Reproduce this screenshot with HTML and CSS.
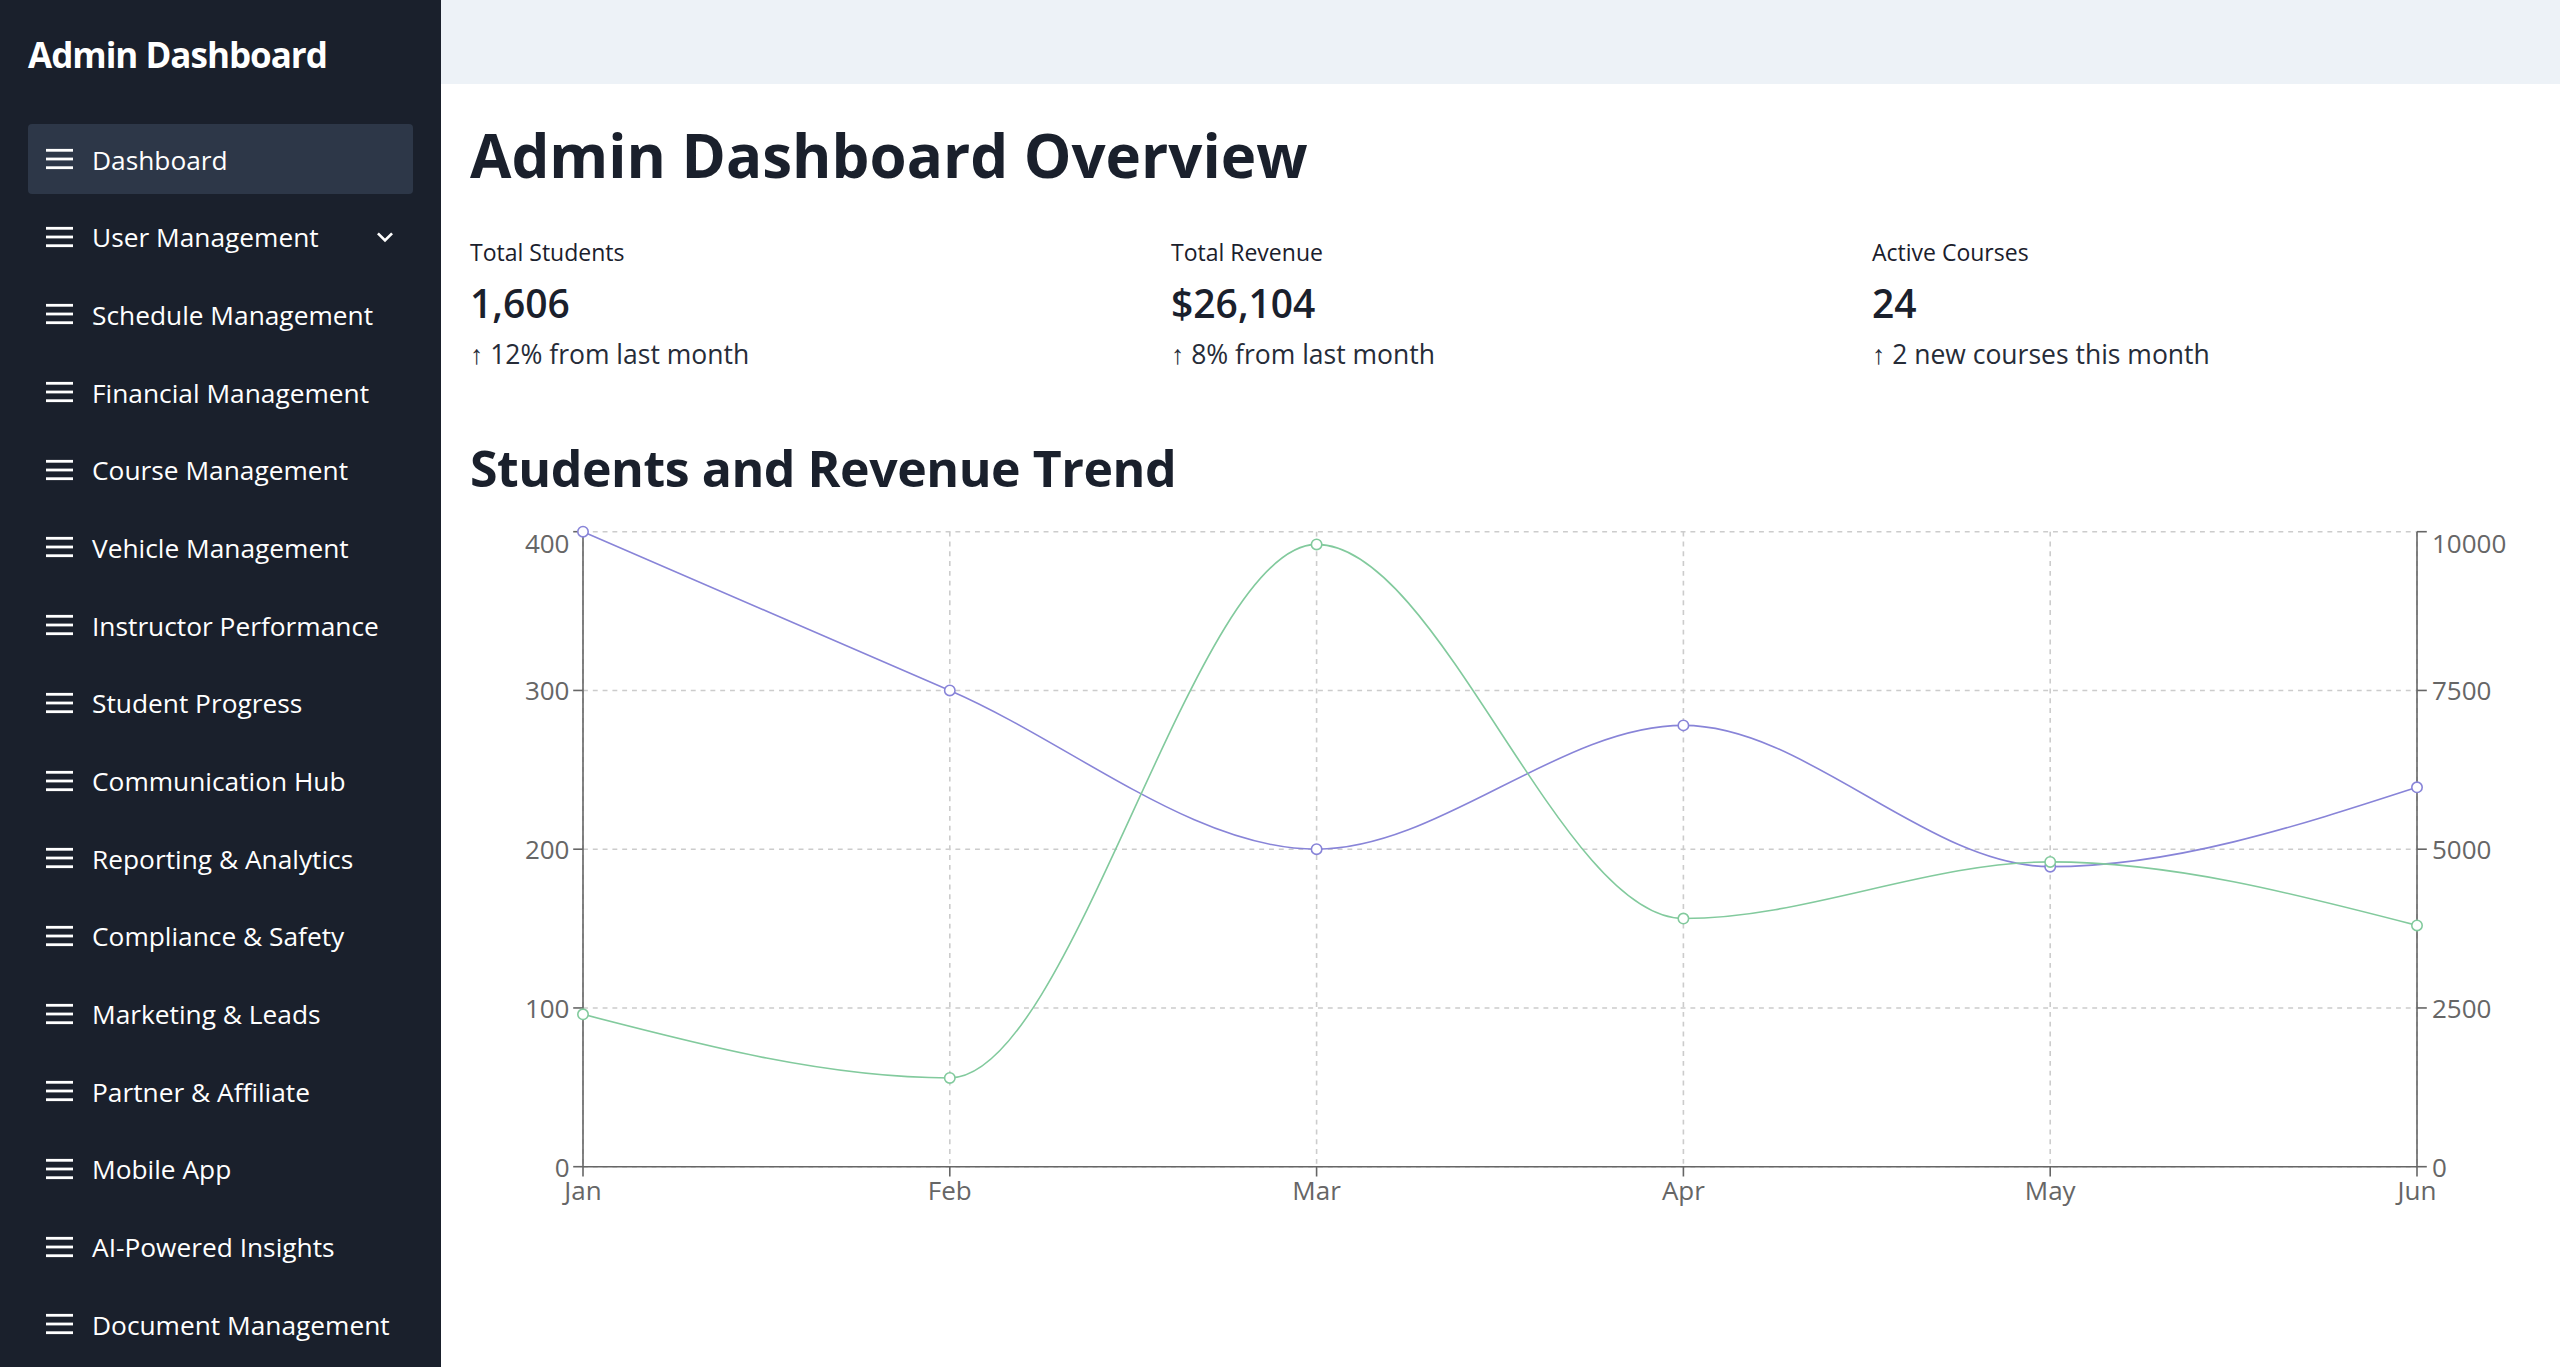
FILE: index.html
```html
<!DOCTYPE html>
<html lang="en">
<head>
<meta charset="utf-8">
<title>Admin Dashboard</title>
<link rel="stylesheet" href="styles.css">
</head>
<body>
<div class="app">
  <aside class="sidebar">
    <div class="brand">Admin Dashboard</div>
    <nav class="nav">
      <a class="nav-item active"><svg class="ham" viewBox="0 0 27 24"><rect x="0" y="1.9" width="27" height="2.8"/><rect x="0" y="10.6" width="27" height="2.8"/><rect x="0" y="19.3" width="27" height="2.8"/></svg><span>Dashboard</span></a>
      <a class="nav-item"><svg class="ham" viewBox="0 0 27 24"><rect x="0" y="1.9" width="27" height="2.8"/><rect x="0" y="10.6" width="27" height="2.8"/><rect x="0" y="19.3" width="27" height="2.8"/></svg><span>User Management</span><svg class="chev" viewBox="0 0 24 24"><path d="M16.59 8.59L12 13.17 7.41 8.59 6 10l6 6 6-6z"/></svg></a>
      <a class="nav-item"><svg class="ham" viewBox="0 0 27 24"><rect x="0" y="1.9" width="27" height="2.8"/><rect x="0" y="10.6" width="27" height="2.8"/><rect x="0" y="19.3" width="27" height="2.8"/></svg><span>Schedule Management</span></a>
      <a class="nav-item"><svg class="ham" viewBox="0 0 27 24"><rect x="0" y="1.9" width="27" height="2.8"/><rect x="0" y="10.6" width="27" height="2.8"/><rect x="0" y="19.3" width="27" height="2.8"/></svg><span>Financial Management</span></a>
      <a class="nav-item"><svg class="ham" viewBox="0 0 27 24"><rect x="0" y="1.9" width="27" height="2.8"/><rect x="0" y="10.6" width="27" height="2.8"/><rect x="0" y="19.3" width="27" height="2.8"/></svg><span>Course Management</span></a>
      <a class="nav-item"><svg class="ham" viewBox="0 0 27 24"><rect x="0" y="1.9" width="27" height="2.8"/><rect x="0" y="10.6" width="27" height="2.8"/><rect x="0" y="19.3" width="27" height="2.8"/></svg><span>Vehicle Management</span></a>
      <a class="nav-item"><svg class="ham" viewBox="0 0 27 24"><rect x="0" y="1.9" width="27" height="2.8"/><rect x="0" y="10.6" width="27" height="2.8"/><rect x="0" y="19.3" width="27" height="2.8"/></svg><span>Instructor Performance</span></a>
      <a class="nav-item"><svg class="ham" viewBox="0 0 27 24"><rect x="0" y="1.9" width="27" height="2.8"/><rect x="0" y="10.6" width="27" height="2.8"/><rect x="0" y="19.3" width="27" height="2.8"/></svg><span>Student Progress</span></a>
      <a class="nav-item"><svg class="ham" viewBox="0 0 27 24"><rect x="0" y="1.9" width="27" height="2.8"/><rect x="0" y="10.6" width="27" height="2.8"/><rect x="0" y="19.3" width="27" height="2.8"/></svg><span>Communication Hub</span></a>
      <a class="nav-item"><svg class="ham" viewBox="0 0 27 24"><rect x="0" y="1.9" width="27" height="2.8"/><rect x="0" y="10.6" width="27" height="2.8"/><rect x="0" y="19.3" width="27" height="2.8"/></svg><span>Reporting &amp; Analytics</span></a>
      <a class="nav-item"><svg class="ham" viewBox="0 0 27 24"><rect x="0" y="1.9" width="27" height="2.8"/><rect x="0" y="10.6" width="27" height="2.8"/><rect x="0" y="19.3" width="27" height="2.8"/></svg><span>Compliance &amp; Safety</span></a>
      <a class="nav-item"><svg class="ham" viewBox="0 0 27 24"><rect x="0" y="1.9" width="27" height="2.8"/><rect x="0" y="10.6" width="27" height="2.8"/><rect x="0" y="19.3" width="27" height="2.8"/></svg><span>Marketing &amp; Leads</span></a>
      <a class="nav-item"><svg class="ham" viewBox="0 0 27 24"><rect x="0" y="1.9" width="27" height="2.8"/><rect x="0" y="10.6" width="27" height="2.8"/><rect x="0" y="19.3" width="27" height="2.8"/></svg><span>Partner &amp; Affiliate</span></a>
      <a class="nav-item"><svg class="ham" viewBox="0 0 27 24"><rect x="0" y="1.9" width="27" height="2.8"/><rect x="0" y="10.6" width="27" height="2.8"/><rect x="0" y="19.3" width="27" height="2.8"/></svg><span>Mobile App</span></a>
      <a class="nav-item"><svg class="ham" viewBox="0 0 27 24"><rect x="0" y="1.9" width="27" height="2.8"/><rect x="0" y="10.6" width="27" height="2.8"/><rect x="0" y="19.3" width="27" height="2.8"/></svg><span>AI-Powered Insights</span></a>
      <a class="nav-item"><svg class="ham" viewBox="0 0 27 24"><rect x="0" y="1.9" width="27" height="2.8"/><rect x="0" y="10.6" width="27" height="2.8"/><rect x="0" y="19.3" width="27" height="2.8"/></svg><span>Document Management</span></a>
    </nav>
  </aside>
  <main class="main">
    <div class="topbar"></div>
    <div class="content">
      <h1 class="title">Admin Dashboard Overview</h1>
      <div class="stats">
        <div class="stat">
          <div class="stat-label">Total Students</div>
          <div class="stat-number">1,606</div>
          <div class="stat-help">↑ 12% from last month</div>
        </div>
        <div class="stat">
          <div class="stat-label">Total Revenue</div>
          <div class="stat-number">$26,104</div>
          <div class="stat-help">↑ 8% from last month</div>
        </div>
        <div class="stat">
          <div class="stat-label">Active Courses</div>
          <div class="stat-number">24</div>
          <div class="stat-help">↑ 2 new courses this month</div>
        </div>
      </div>
      <h2 class="section-title">Students and Revenue Trend</h2>
      <svg class="chart" width="2061" height="720" viewBox="470 500 2061 720">
        <g class="grid">
          <line x1="583" y1="531.7" x2="2417" y2="531.7"/>
          <line x1="583" y1="690.45" x2="2417" y2="690.45"/>
          <line x1="583" y1="849.2" x2="2417" y2="849.2"/>
          <line x1="583" y1="1007.95" x2="2417" y2="1007.95"/>
          <line x1="583" y1="1166.7" x2="2417" y2="1166.7"/>
          <line x1="583" y1="531.7" x2="583" y2="1166.7"/>
          <line x1="949.8" y1="531.7" x2="949.8" y2="1166.7"/>
          <line x1="1316.6" y1="531.7" x2="1316.6" y2="1166.7"/>
          <line x1="1683.4" y1="531.7" x2="1683.4" y2="1166.7"/>
          <line x1="2050.2" y1="531.7" x2="2050.2" y2="1166.7"/>
          <line x1="2417" y1="531.7" x2="2417" y2="1166.7"/>
        </g>
        <g class="axis">
          <line x1="583" y1="1166.7" x2="2417" y2="1166.7"/>
          <line x1="583" y1="531.7" x2="583" y2="1166.7"/>
          <line x1="2417" y1="531.7" x2="2417" y2="1166.7"/>
          <line x1="583" y1="1166.7" x2="583" y2="1176.5"/>
          <line x1="949.8" y1="1166.7" x2="949.8" y2="1176.5"/>
          <line x1="1316.6" y1="1166.7" x2="1316.6" y2="1176.5"/>
          <line x1="1683.4" y1="1166.7" x2="1683.4" y2="1176.5"/>
          <line x1="2050.2" y1="1166.7" x2="2050.2" y2="1176.5"/>
          <line x1="2417" y1="1166.7" x2="2417" y2="1176.5"/>
          <line x1="573.2" y1="531.7" x2="583" y2="531.7"/>
          <line x1="573.2" y1="690.45" x2="583" y2="690.45"/>
          <line x1="573.2" y1="849.2" x2="583" y2="849.2"/>
          <line x1="573.2" y1="1007.95" x2="583" y2="1007.95"/>
          <line x1="573.2" y1="1166.7" x2="583" y2="1166.7"/>
          <line x1="2417" y1="531.7" x2="2426.8" y2="531.7"/>
          <line x1="2417" y1="690.45" x2="2426.8" y2="690.45"/>
          <line x1="2417" y1="849.2" x2="2426.8" y2="849.2"/>
          <line x1="2417" y1="1007.95" x2="2426.8" y2="1007.95"/>
          <line x1="2417" y1="1166.7" x2="2426.8" y2="1166.7"/>
        </g>
        <g class="tick-left">
          <text x="569.5" y="553.3">400</text>
          <text x="569.5" y="700.45">300</text>
          <text x="569.5" y="859.2">200</text>
          <text x="569.5" y="1017.95">100</text>
          <text x="569.5" y="1176.7">0</text>
        </g>
        <g class="tick-right">
          <text x="2432" y="553.3">10000</text>
          <text x="2432" y="700.45">7500</text>
          <text x="2432" y="859.2">5000</text>
          <text x="2432" y="1017.95">2500</text>
          <text x="2432" y="1176.7">0</text>
        </g>
        <g class="tick-x">
          <text x="583" y="1200">Jan</text>
          <text x="949.8" y="1200">Feb</text>
          <text x="1316.6" y="1200">Mar</text>
          <text x="1683.4" y="1200">Apr</text>
          <text x="2050.2" y="1200">May</text>
          <text x="2417" y="1200">Jun</text>
        </g>
        <path class="line-purple" d="M583,531.7 C705.27,584.62 827.53,637.53 949.8,690.45 C1072.07,743.37 1194.33,849.2 1316.6,849.2 C1438.87,849.2 1561.13,725.375 1683.4,725.375 C1805.67,725.375 1927.93,866.66 2050.2,866.66 C2172.47,866.66 2294.73,826.98 2417,787.29"/>
        <path class="line-green" d="M583,1014.3 C705.27,1046.11 827.53,1077.93 949.8,1077.93 C1072.07,1077.93 1194.33,544.4 1316.6,544.4 C1438.87,544.4 1561.13,918.54 1683.4,918.54 C1805.67,918.54 1927.93,861.9 2050.2,861.9 C2172.47,861.9 2294.73,893.65 2417,925.4"/>
        <g class="dots-purple">
          <circle cx="583" cy="531.7" r="5.2"/>
          <circle cx="949.8" cy="690.45" r="5.2"/>
          <circle cx="1316.6" cy="849.2" r="5.2"/>
          <circle cx="1683.4" cy="725.375" r="5.2"/>
          <circle cx="2050.2" cy="866.66" r="5.2"/>
          <circle cx="2417" cy="787.29" r="5.2"/>
        </g>
        <g class="dots-green">
          <circle cx="583" cy="1014.3" r="5.2"/>
          <circle cx="949.8" cy="1077.93" r="5.2"/>
          <circle cx="1316.6" cy="544.4" r="5.2"/>
          <circle cx="1683.4" cy="918.54" r="5.2"/>
          <circle cx="2050.2" cy="861.9" r="5.2"/>
          <circle cx="2417" cy="925.4" r="5.2"/>
        </g>
      </svg>
    </div>
  </main>
</div>
</body>
</html>
```

FILE: styles.css
```css
html, body {
  margin: 0;
  padding: 0;
  height: 100%;
  overflow: hidden;
}

body {
  font-family: "Open Sans", "Noto Sans", sans-serif;
  color: #1a202c;
  background: #ffffff;
}

.app {
  display: flex;
  height: 100vh;
}

.sidebar {
  width: 441px;
  flex-shrink: 0;
  box-sizing: border-box;
  padding: 28px 28px 0;
  background: #1a202c;
  color: #ffffff;
  overflow: hidden;
}

.brand {
  font-size: 35px;
  font-weight: 700;
  line-height: 53px;
  letter-spacing: -1px;
  margin-bottom: 43px;
  white-space: nowrap;
}

.nav {
  display: flex;
  flex-direction: column;
  gap: 7.7px;
}

.nav-item {
  display: flex;
  align-items: center;
  box-sizing: border-box;
  height: 70px;
  padding: 1px 12px 0 18px;
  border-radius: 4px;
  color: #ffffff;
  font-size: 26.3px;
  white-space: nowrap;
}

.nav-item.active {
  background: #2d3748;
}

.ham {
  width: 27px;
  height: 24px;
  flex-shrink: 0;
  margin-right: 19px;
  margin-top: -1px;
  fill: #ffffff;
}

.chev {
  width: 32px;
  height: 32px;
  margin-left: auto;
  margin-top: -1px;
  fill: #ffffff;
}

.main {
  flex: 1;
  display: flex;
  flex-direction: column;
  min-width: 0;
}

.topbar {
  height: 84px;
  flex-shrink: 0;
  background: #edf2f7;
}

.content {
  padding: 0 29px;
}

.title {
  margin: 34.7px 0 0;
  font-size: 60px;
  line-height: 72px;
  font-weight: 700;
  letter-spacing: 0;
}

.stats {
  display: grid;
  grid-template-columns: repeat(3, 1fr);
  column-gap: 42px;
  margin-top: 46.2px;
}

.stat-label {
  font-size: 23px;
  line-height: 31px;
  font-weight: 500;
}

.stat-number {
  margin-top: 8.1px;
  font-size: 39px;
  line-height: 53px;
  font-weight: 600;
}

.stat-help {
  margin-top: 8.3px;
  font-size: 26.5px;
  line-height: 35px;
  color: #262c38;
}

.section-title {
  margin: 65.6px 0 0;
  font-size: 50px;
  line-height: 60px;
  font-weight: 700;
  letter-spacing: -0.45px;
}

.chart {
  display: block;
  margin-top: 2.1px;
  overflow: visible;
}

.grid line {
  stroke: #cccccc;
  stroke-width: 1.6;
  stroke-dasharray: 4.9 4.9;
}

.axis line {
  stroke: #666666;
  stroke-width: 1.6;
}

.tick-left text,
.tick-right text,
.tick-x text {
  font-family: "Open Sans", "Noto Sans", sans-serif;
  font-size: 26px;
  fill: #666666;
}

.tick-left text {
  text-anchor: end;
}

.tick-right text {
  text-anchor: start;
}

.tick-x text {
  text-anchor: middle;
}

.line-purple,
.line-green {
  fill: none;
  stroke-width: 1.6;
}

.line-purple {
  stroke: #8884d8;
}

.line-green {
  stroke: #82ca9d;
}

.dots-purple circle,
.dots-green circle {
  fill: #ffffff;
  stroke-width: 1.6;
}

.dots-purple circle {
  stroke: #8884d8;
}

.dots-green circle {
  stroke: #82ca9d;
}
```
